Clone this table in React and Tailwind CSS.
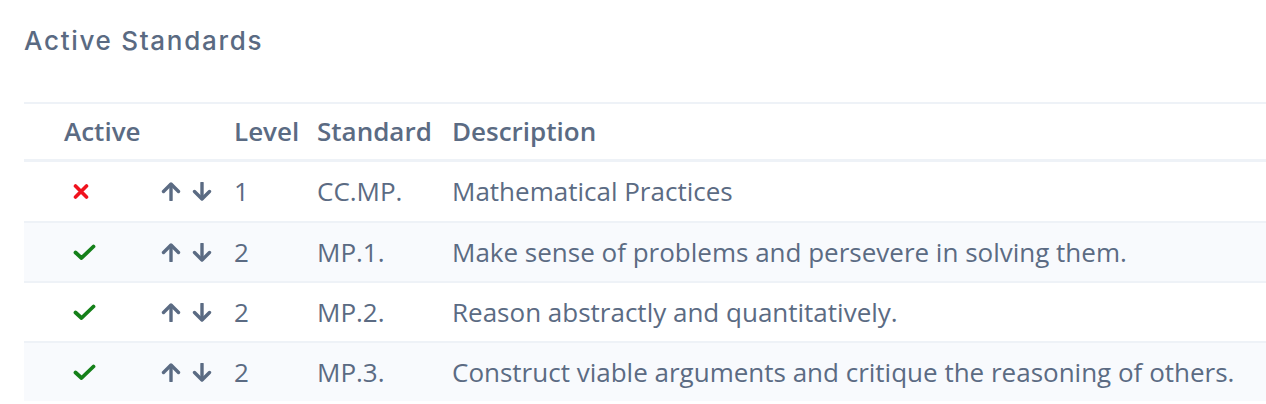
import React from "react";

const rows = [
  { active: false, level: "1", std: "CC.MP.", desc: "Mathematical Practices" },
  { active: true, level: "2", std: "MP.1.", desc: "Make sense of problems and persevere in solving them." },
  { active: true, level: "2", std: "MP.2.", desc: "Reason abstractly and quantitatively." },
  { active: true, level: "2", std: "MP.3.", desc: "Construct viable arguments and critique the reasoning of others." },
];

function Cross() {
  return (
    <svg width="16" height="15" viewBox="0 0 16 15" className="block">
      <path d="M2.5 2 L13.5 13 M13.5 2 L2.5 13" stroke="#f0121e" strokeWidth="3.6" strokeLinecap="round" fill="none" />
    </svg>
  );
}

function Check() {
  return (
    <svg width="23" height="17" viewBox="0 0 23 17" className="block">
      <path d="M2.5 8.5 L8.5 14 L20.5 2.5" stroke="#15801a" strokeWidth="3.8" strokeLinecap="round" strokeLinejoin="round" fill="none" />
    </svg>
  );
}

function Arrow({ down }) {
  return (
    <svg width="20" height="19" viewBox="0 0 20 19" className="block" style={down ? { transform: "rotate(180deg)" } : undefined}>
      <path d="M10 3 L10 18" stroke="#5b6b83" strokeWidth="3.4" strokeLinecap="round" fill="none" />
      <path d="M2.5 9.5 L10 2 L17.5 9.5" stroke="#5b6b83" strokeWidth="3.4" strokeLinecap="round" strokeLinejoin="round" fill="none" />
    </svg>
  );
}

export default function App() {
  return (
    <div className="w-[1266px] h-[404px] overflow-hidden bg-white text-[#5b6b83]" style={{ fontFamily: '"Open Sans", sans-serif' }}>
      <div className="pl-[24px] pt-[25px]">
        <h2 className="text-[26px] leading-[32px] font-medium tracking-[1.7px] text-[#5a6a82]" style={{ fontFamily: 'Inter, "Open Sans", sans-serif' }}>
          Active Standards
        </h2>
        <div className="mt-[45px] w-[1300px] border-t-2 border-[#eef2f7]">
          <div className="flex h-[58px] items-center text-[26px] font-semibold border-b-[3px] border-[#eef2f7]">
            <div className="w-[124px] pl-[40px]">Active</div>
            <div className="w-[74px]"></div>
            <div className="w-[83px] pl-[12px]">Level</div>
            <div className="w-[135px] pl-[12px]">Standard</div>
            <div className="pl-[12px]">Description</div>
          </div>
          {rows.map((r, i) => (
            <div
              key={i}
              className={
                "flex items-center text-[26px] " +
                (i === 0 ? "h-[59px] " : "h-[60px] border-t-2 border-[#eef2f7] ") +
                (i % 2 === 1 ? "bg-[#f8fafd]" : "bg-white")
              }
            >
              <div className="w-[124px] pl-[49px]">{r.active ? <Check /> : <Cross />}</div>
              <div className="w-[74px] pl-[13px] flex gap-[11px]">
                <Arrow />
                <Arrow down />
              </div>
              <div className="w-[83px] pl-[12px]">{r.level}</div>
              <div className="w-[135px] pl-[12px]">{r.std}</div>
              <div className="pl-[12px] whitespace-nowrap">{r.desc}</div>
            </div>
          ))}
        </div>
      </div>
    </div>
  );
}
